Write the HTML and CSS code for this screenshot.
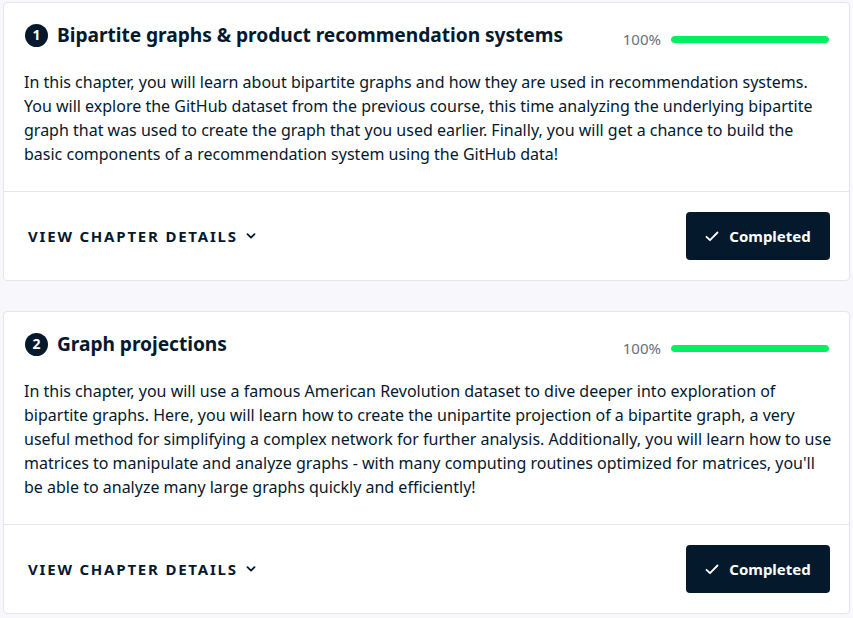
FILE: index.html
```html
<!DOCTYPE html>
<html lang="en">
<head>
<meta charset="utf-8">
<link rel="stylesheet" href="styles.css">
</head>
<body>
<main class="chapters">
  <section class="card">
    <div class="card-body">
      <div class="card-head">
        <h3 class="title"><span class="badge">1</span>Bipartite graphs &amp; product recommendation systems</h3>
        <div class="progress">
          <span class="pct">100%</span>
          <span class="track"><span class="fill" style="width:100%"></span></span>
        </div>
      </div>
      <p class="desc">In this chapter, you will learn about bipartite graphs and how they are used in recommendation systems. You will explore the GitHub dataset from the previous course, this time analyzing the underlying bipartite graph that was used to create the graph that you used earlier. Finally, you will get a chance to build the basic components of a recommendation system using the GitHub data!</p>
    </div>
    <div class="card-foot">
      <button class="details">VIEW CHAPTER DETAILS
        <svg class="chev" width="10" height="6" viewBox="0 0 10 6"><path d="M1.5 1.2 L5 4.6 L8.5 1.2" fill="none" stroke="currentColor" stroke-width="1.8" stroke-linecap="round" stroke-linejoin="round"/></svg>
      </button>
      <button class="done">
        <svg class="check" width="14" height="11" viewBox="0 0 14 11"><path d="M1.5 5.8 L5 9.2 L12.5 1.5" fill="none" stroke="currentColor" stroke-width="1.8" stroke-linecap="round" stroke-linejoin="round"/></svg>
        Completed
      </button>
    </div>
  </section>

  <section class="card">
    <div class="card-body">
      <div class="card-head">
        <h3 class="title"><span class="badge">2</span>Graph projections</h3>
        <div class="progress">
          <span class="pct">100%</span>
          <span class="track"><span class="fill" style="width:100%"></span></span>
        </div>
      </div>
      <p class="desc">In this chapter, you will use a famous American Revolution dataset to dive deeper into exploration of bipartite graphs. Here, you will learn how to create the unipartite projection of a bipartite graph, a very useful method for simplifying a complex network for further analysis. Additionally, you will learn how to use matrices to manipulate and analyze graphs - with many computing routines optimized for matrices, you'll be able to analyze many large graphs quickly and efficiently!</p>
    </div>
    <div class="card-foot">
      <button class="details">VIEW CHAPTER DETAILS
        <svg class="chev" width="10" height="6" viewBox="0 0 10 6"><path d="M1.5 1.2 L5 4.6 L8.5 1.2" fill="none" stroke="currentColor" stroke-width="1.8" stroke-linecap="round" stroke-linejoin="round"/></svg>
      </button>
      <button class="done">
        <svg class="check" width="14" height="11" viewBox="0 0 14 11"><path d="M1.5 5.8 L5 9.2 L12.5 1.5" fill="none" stroke="currentColor" stroke-width="1.8" stroke-linecap="round" stroke-linejoin="round"/></svg>
        Completed
      </button>
    </div>
  </section>
</main>
</body>
</html>
```

FILE: styles.css
```css
* { box-sizing: border-box; }
html, body { margin: 0; padding: 0; }
body {
  background: #f7f7fc;
  font-family: "Noto Sans", "DejaVu Sans", sans-serif;
  color: #05192d;
}
.chapters {
  display: flex;
  flex-direction: column;
  gap: 30px;
  padding: 2px 3px 0 3px;
}
.card {
  background: #fff;
  border: 1px solid #e5e5ec;
  border-radius: 4px;
}
.card-body {
  padding: 16px 20px 25px 20px;
  border-bottom: 1px solid #e5e5ec;
}
.card-head {
  display: flex;
  justify-content: space-between;
  align-items: flex-start;
}
.title {
  margin: 0;
  display: flex;
  align-items: center;
  font-size: 19.2px;
  font-weight: 700;
  line-height: 32px;
  letter-spacing: -0.05px;
}
.badge {
  display: inline-flex;
  align-items: center;
  justify-content: center;
  width: 23px;
  height: 23px;
  border-radius: 50%;
  background: #05192d;
  color: #fff;
  font-size: 14px;
  font-weight: 700;
  margin: 0 9px 0 1px;
}
.progress {
  display: flex;
  align-items: center;
  gap: 10px;
  padding-top: 10px;
}
.pct {
  font-size: 15px;
  color: #65707c;
  line-height: 20px;
}
.track {
  display: block;
  width: 158px;
  height: 7px;
  border-radius: 4px;
  background: #e5e5ec;
  overflow: hidden;
}
.fill {
  display: block;
  height: 100%;
  background: #03ef62;
  border-radius: 4px;
}
.desc {
  margin: 19px -4px 0 0;
  font-size: 16px;
  line-height: 24px;
}
.card-foot {
  display: flex;
  justify-content: space-between;
  align-items: center;
  padding: 20px 19px 20px 20px;
}
.details {
  display: inline-flex;
  align-items: center;
  gap: 8px;
  background: none;
  border: 0;
  padding: 0 4px;
  font-family: inherit;
  font-size: 15px;
  font-weight: 700;
  letter-spacing: 1.8px;
  line-height: 20px;
  color: #05192d;
  cursor: pointer;
}
.chev { display: block; }
.done {
  display: inline-flex;
  align-items: center;
  justify-content: center;
  gap: 10px;
  width: 144px;
  height: 48px;
  background: #05192d;
  color: #fff;
  border: 0;
  border-radius: 4px;
  font-family: inherit;
  font-size: 15px;
  font-weight: 700;
  cursor: pointer;
}
.check { display: block; }
```
